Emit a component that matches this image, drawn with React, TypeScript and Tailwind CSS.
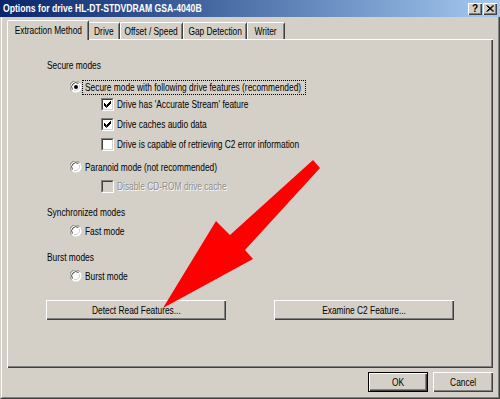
import React from "react";

const font = { fontFamily: '"Liberation Sans", Arial, sans-serif' };

function T({ children, center, className = "" }: { children: React.ReactNode; center?: boolean; className?: string }) {
  return (
    <span
      className={`inline-block whitespace-nowrap scale-x-[0.76] ${center ? "origin-center" : "origin-left"} ${className}`}
    >
      {children}
    </span>
  );
}

function Radio({ checked }: { checked?: boolean }) {
  return (
    <svg width="12" height="12" viewBox="0 0 12 12" className="shrink-0">
      <circle cx="6" cy="6" r="5.5" fill="#fff" />
      <path d="M1.5 9.5 A5.5 5.5 0 0 1 9.5 1.5" stroke="#808080" strokeWidth="1" fill="none" />
      <path d="M2.5 8.5 A4.3 4.3 0 0 1 8.5 2.5" stroke="#404040" strokeWidth="1" fill="none" />
      <path d="M10.2 2.8 A5.5 5.5 0 0 1 2.8 10.2" stroke="#fff" strokeWidth="1" fill="none" />
      <path d="M9.3 3.7 A4.3 4.3 0 0 1 3.7 9.3" stroke="#D4D0C8" strokeWidth="1" fill="none" />
      {checked && <circle cx="6" cy="6" r="2" fill="#000" />}
    </svg>
  );
}

function Check({ checked, disabled }: { checked?: boolean; disabled?: boolean }) {
  return (
    <div className="w-[13px] h-[13px] shrink-0 border border-t-[#808080] border-l-[#808080] border-r-white border-b-white">
      <div
        className={`w-full h-full border border-t-[#404040] border-l-[#404040] border-r-[#D4D0C8] border-b-[#D4D0C8] ${
          disabled ? "bg-[#D4D0C8]" : "bg-white"
        }`}
      >
        {checked && (
          <svg width="9" height="9" viewBox="0 0 9 9">
            <path d="M1 3 L3.5 5.5 L8 1 M1 4 L3.5 6.5 L8 2 M1 5 L3.5 7.5 L8 3" stroke="#000" strokeWidth="1" fill="none" />
          </svg>
        )}
      </div>
    </div>
  );
}

const raised =
  "shadow-[inset_1px_1px_#fff,inset_-1px_-1px_#404040,inset_-2px_-2px_#808080,inset_2px_2px_#D4D0C8]";

function Tab({ label, w, selected }: { label: string; w: string; selected?: boolean }) {
  return (
    <div
      className={`${w} relative flex items-center justify-center rounded-t-[2px] border-l border-t border-l-white border-t-white border-r border-r-[#404040] bg-[#D4D0C8] ${
        selected ? "h-[20px] z-10 -mb-[1px] -mx-[2px] px-[2px]" : "h-[17px]"
      }`}
    >
      <div className="absolute right-0 top-[1px] bottom-0 w-px bg-[#808080]" />
      <T center className="text-[11px] leading-none text-black">{label}</T>
    </div>
  );
}

export default function App() {
  return (
    <div className="w-[500px] h-[399px] overflow-hidden relative bg-[#D4D0C8]" style={font}>
      <div className="w-full h-full border-l border-l-[#D4D0C8] border-r border-r-[#404040] border-b border-b-[#404040]">
        <div className="w-full h-full border-l border-l-white border-r border-r-[#808080] border-b border-b-[#808080] flex flex-col">
          {/* Title bar */}
          <div className="h-[17px] mx-[-2px] flex items-center bg-gradient-to-r from-[#0A246A] to-[#A6CAF0] pl-[3px] pr-[3px]">
            <span className="flex-1 text-white font-bold text-[11px] leading-none">
              <span className="inline-block whitespace-nowrap scale-x-[0.785] origin-left">
                Options for drive HL-DT-STDVDRAM GSA-4040B
              </span>
            </span>
            <div className={`w-[14px] h-[12px] bg-[#D4D0C8] ${raised} flex items-center justify-center text-[10px] font-bold leading-none text-black`}>
              ?
            </div>
            <div className={`w-[14px] h-[12px] ml-[1px] bg-[#D4D0C8] ${raised} flex items-center justify-center`}>
              <svg width="8" height="7" viewBox="0 0 8 7">
                <path d="M0.5 0.5 L7 6.5 M1.5 0.5 L8 6.5 M7 0.5 L0.5 6.5 M8 0.5 L1.5 6.5" stroke="#000" strokeWidth="1" />
              </svg>
            </div>
          </div>

          {/* Tabs */}
          <div className="mt-[5px] ml-[7px] mr-[5px] flex items-end h-[17px] relative">
            <Tab label="Extraction Method" w="w-[82px]" selected />
            <Tab label="Drive" w="w-[33px]" />
            <Tab label="Offset / Speed" w="w-[63px]" />
            <Tab label="Gap Detection" w="w-[64px]" />
            <Tab label="Writer" w="w-[38px]" />
          </div>

          {/* Panel */}
          <div className="ml-[5px] mr-[5px] h-[329px] bg-[#D4D0C8] shadow-[inset_1px_1px_#fff,inset_-1px_-1px_#404040,inset_-2px_-2px_#808080] pl-[40px] pt-[18px] flex flex-col text-[11px] leading-none text-black">
            <div className="h-[16px] flex items-center"><T>Secure modes</T></div>

            <div className="h-[16px] mt-[6px] ml-[23px] flex items-center">
              <Radio checked />
              <span className="w-[224px] h-[15px] flex items-center pl-[2px] border border-dotted border-black">
                <T>Secure mode with following drive features (recommended)</T>
              </span>
            </div>
            <div className="h-[16px] mt-[1px] ml-[54px] flex items-center gap-[3px]">
              <Check checked />
              <T>Drive has 'Accurate Stream' feature</T>
            </div>
            <div className="h-[16px] mt-[4px] ml-[54px] flex items-center gap-[3px]">
              <Check checked />
              <T>Drive caches audio data</T>
            </div>
            <div className="h-[16px] mt-[4px] ml-[54px] flex items-center gap-[3px]">
              <Check />
              <T>Drive is capable of retrieving C2 error information</T>
            </div>

            <div className="h-[16px] mt-[7px] ml-[23px] flex items-center gap-[3px]">
              <Radio />
              <T>Paranoid mode (not recommended)</T>
            </div>
            <div className="h-[16px] mt-[3px] ml-[54px] flex items-center gap-[3px]">
              <Check disabled />
              <T className="text-[#8c8c8c] [text-shadow:1px_1px_#fff]">Disable CD-ROM drive cache</T>
            </div>

            <div className="h-[16px] mt-[10px] flex items-center"><T>Synchronized modes</T></div>
            <div className="h-[16px] mt-[3px] ml-[23px] flex items-center gap-[3px]">
              <Radio />
              <T>Fast mode</T>
            </div>

            <div className="h-[16px] mt-[10px] flex items-center"><T>Burst modes</T></div>
            <div className="h-[16px] mt-[3px] ml-[23px] flex items-center gap-[3px]">
              <Radio />
              <T>Burst mode</T>
            </div>

            <div className="mt-[16px] ml-[-1px] flex">
              <div className={`w-[180px] h-[20px] ${raised} flex items-center justify-center`}><T center>Detect Read Features...</T></div>
              <div className={`w-[180px] h-[20px] ml-[48px] ${raised} flex items-center justify-center`}><T center>Examine C2 Feature...</T></div>
            </div>
          </div>

          {/* Bottom buttons */}
          <div className="mt-[4px] mr-[5px] flex justify-end gap-[5px] text-[11px] leading-none text-black">
            <div className="w-[60px] h-[20px] border border-black">
              <div className={`w-full h-full ${raised} flex items-center justify-center`}><T center>OK</T></div>
            </div>
            <div className={`w-[60px] h-[20px] ${raised} flex items-center justify-center`}><T center>Cancel</T></div>
          </div>
        </div>
      </div>

      {/* Red arrow annotation */}
      <svg className="absolute inset-0 pointer-events-none" width="500" height="399" viewBox="0 0 500 399">
        <polygon points="313,160 320,168 245,250 253,259 163,308 216,221 230,235" fill="#FF0000" />
      </svg>
    </div>
  );
}
